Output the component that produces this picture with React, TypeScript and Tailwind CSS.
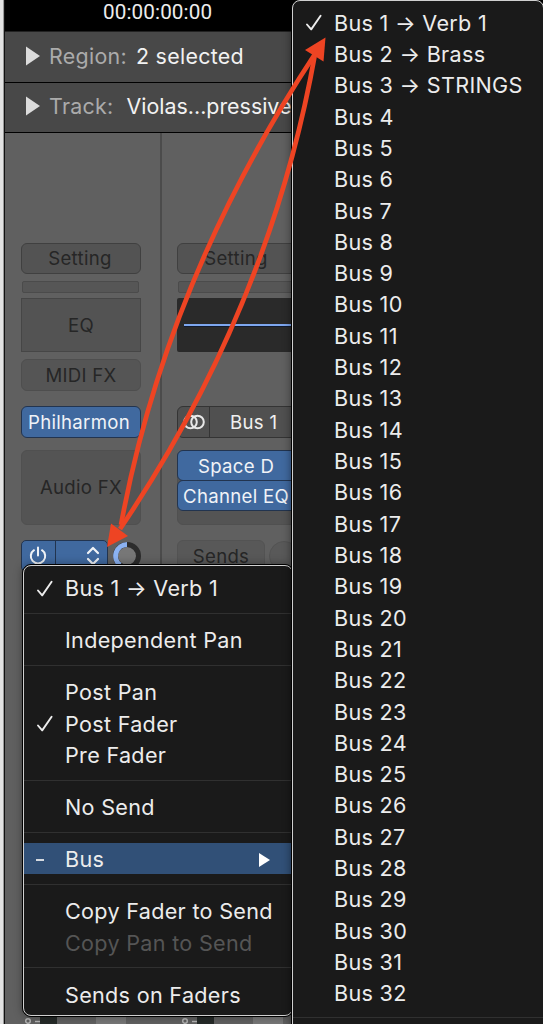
import React from 'react'
import clsx from 'clsx'

type Item = {
    label?: string
    checked?: boolean
    disabled?: boolean
    active?: boolean
}

const sendMenu: Item[] = [
    { label: 'Bus 1 → Verb 1', checked: true },
    {},
    { label: 'Independent Pan' },
    {},
    { label: 'Post Pan' },
    { label: 'Post Fader', checked: true },
    { label: 'Pre Fader' },
    {},
    { label: 'No Send' },
    {},
    { label: 'Bus', active: true },
    {},
    { label: 'Copy Fader to Send' },
    { label: 'Copy Pan to Send', disabled: true },
    {},
    { label: 'Sends on Faders' },
]

const busNames: Record<number, string> = { 1: 'Verb 1', 2: 'Brass', 3: 'STRINGS' }

const busMenu: Item[] = Array.from({ length: 32 }, (_, i) => ({
    label: busNames[i + 1] ? `Bus ${i + 1} → ${busNames[i + 1]}` : `Bus ${i + 1}`,
    checked: i === 0,
}))

const Check = () => (
    <svg width="18" height="18" viewBox="0 0 18 18" fill="none" stroke="#ececec" strokeWidth="1.9" strokeLinecap="round" strokeLinejoin="round">
        <path d="M2 10.5 L6.2 15.4 L15.6 1.8" />
    </svg>
)

const MenuRow = ({ item }: { item: Item }) => {
    if (!item.label) {
        return (
            <div className="flex h-[20.85px] shrink-0 items-center">
                <div className="-mt-px h-px w-full bg-[#303030]"></div>
            </div>
        )
    }
    return (
        <div className={clsx('flex h-[31.32px] shrink-0 items-center whitespace-pre pt-[2px] text-[21.6px] leading-[29px]',
            item.active && 'bg-[#315077]',
            item.disabled ? 'text-[#555]' : 'text-[#ececec]')}>
            <div className="flex w-[41px] shrink-0 pl-[12px]">
                {item.checked && <Check />}
                {item.active && <div className="h-[2px] w-[8px] bg-[#d5dae0]"></div>}
            </div>
            <span className="grow">{item.label}</span>
            {item.active && (
                <svg className="mr-[22px]" width="11" height="14" viewBox="0 0 11 14">
                    <path d="M0 0 L11 7 L0 14 Z" fill="#fff" />
                </svg>
            )}
        </div>
    )
}

const InspectorRow = ({ name, value, valueClass }: { name: string; value: string; valueClass: string }) => (
    <div className="flex h-[50.5px] shrink-0 items-center border-b border-black bg-[#484848] pb-[2px] pl-[21px] text-[21.4px] whitespace-nowrap">
        <svg className="shrink-0" width="14" height="20" viewBox="0 0 14 20">
            <path d="M0 0.5 L14 10 L0 19.5 Z" fill="#dcdcdc" />
        </svg>
        <span className="ml-[9px] text-[#ababab]">{name}</span>
        <span className={clsx('text-[#f2f2f2]', valueClass)}>{value}</span>
    </div>
)

const slot = 'flex w-[120px] shrink-0 items-center justify-center border pt-px text-[18.6px] whitespace-nowrap'

const StripOne = () => (
    <div className="flex w-[157px] shrink-0 flex-col border-r-2 border-[#4b4b4b] pl-[16px] pt-[110px] text-[#262626]">
        <div className={clsx(slot, 'h-[31px] rounded-[6px] border-[#404040] bg-[#535353] pr-[2px]')}>Setting</div>
        <div className="mt-[7px] ml-[1px] h-[12px] w-[117px] shrink-0 rounded-[2px] border border-[#4b4b4b] bg-[#565656]"></div>
        <div className={clsx(slot, 'mt-[5px] h-[54px] border-[#464646] bg-[#535353]')}>EQ</div>
        <div className={clsx(slot, 'mt-[7px] h-[32px] rounded-[6px] border-[#4e4e4e] bg-[#555]')}>MIDI FX</div>
        <div className={clsx(slot, 'mt-[15px] h-[32px] rounded-[6px] border-[#22344f] bg-[#40699f] pr-[4px] text-[#f0f3f7]')}>Philharmon</div>
        <div className={clsx(slot, 'mt-[12px] h-[75px] rounded-[6px] border-[#505050] bg-[#545454]')}>Audio FX</div>
        <div className="mt-[15px] flex">
            <div className="flex h-[32px] w-[87px] items-center rounded-[5px] border border-[#22344f] bg-[#40699f]">
                <div className="flex h-full w-[34px] items-center justify-center border-r border-[#22344f]">
                    <svg className="mr-[1px]" width="18" height="20" viewBox="0 0 18 20" fill="none" stroke="#f0f3f7" strokeWidth="2" strokeLinecap="round">
                        <path d="M9 1.500 V9.500 M5 4.2 A7.2 7.2 0 1 0 13 4.2" />
                    </svg>
                </div>
                <svg className="ml-[30px] shrink-0" width="14" height="20" viewBox="0 0 14 20" fill="none" stroke="#f0f3f7" strokeWidth="2.2" strokeLinecap="round" strokeLinejoin="round">
                    <path d="M2 7 L7 2 L12 7 M2 13 L7 18 L12 13" />
                </svg>
            </div>
            <svg className="ml-[5px] mt-[1px]" width="28" height="30" viewBox="0 0 28 30">
                <circle cx="14" cy="15" r="9" fill="#777" />
                <circle cx="14" cy="15" r="11.5" fill="none" stroke="#2c2c2c" strokeWidth="5" />
                <path d="M14 3.5 A11.5 11.5 0 0 0 7 24" fill="none" stroke="#8bb2f2" strokeWidth="5" />
            </svg>
        </div>
    </div>
)

const StripTwo = () => (
    <div className="flex grow flex-col pl-[15px] pt-[110px] text-[#262626]">
        <div className={clsx(slot, 'h-[31px] rounded-[6px] border-[#404040] bg-[#535353] pr-[2px]')}>Setting</div>
        <div className="mt-[7px] ml-[1px] h-[12px] w-[117px] shrink-0 rounded-[2px] border border-[#4b4b4b] bg-[#565656]"></div>
        <div className="mt-[5px] flex h-[54px] w-[120px] shrink-0 items-center rounded-[2px] bg-[#2a2a2a] pl-[7px]">
            <div className="h-[3px] w-full border-b border-[#101b30] bg-[#7ea7ef]"></div>
        </div>
        <div className="mt-[54px] flex h-[32px] w-[130px] shrink-0 items-center rounded-[6px] border border-[#343434] bg-[#505050] text-[18.6px] text-[#f0f0f0]">
            <div className="flex h-full w-[32px] items-center justify-center border-r border-[#343434]">
                <svg width="22" height="16" viewBox="0 0 22 16" fill="none" stroke="#e8e8e8" strokeWidth="2">
                    <circle cx="7.5" cy="8" r="6.3" />
                    <circle cx="14.5" cy="8" r="6.3" />
                </svg>
            </div>
            <span className="ml-[20px] pt-[2px]">Bus 1</span>
        </div>
        <div className="mt-[12px] h-[75px] w-[120px] shrink-0 rounded-[6px] border border-[#505050] bg-[#545454] text-[18.6px] whitespace-nowrap text-[#f0f3f7]">
            <div className="-mt-px -ml-px flex h-[31px] w-[120px] items-center rounded-[6px] border border-[#22344f] bg-[#40699f] pl-[20px] pt-[2px]">Space D</div>
            <div className="-mt-px -ml-px flex h-[31px] w-[120px] items-center rounded-[6px] border border-[#22344f] bg-[#40699f] pl-[5px] pt-[2px]">Channel EQ</div>
        </div>
        <div className="mt-[15px] flex">
            <div className="flex h-[32px] w-[88px] shrink-0 items-center justify-center rounded-[6px] border border-[#535353] bg-[#585858] pt-[2px] text-[18.6px]">Sends</div>
            <div className="ml-[4px] mt-[1px] h-[30px] w-[30px] shrink-0 rounded-full border border-[#535353] bg-[#595959]"></div>
        </div>
    </div>
)

// fader scales that stick out under the send menu
const FaderScale = () => (
    <div className="flex h-[7px] w-[157px] shrink-0 items-start">
        <svg width="15" height="7" viewBox="0 0 15 7" fill="none" stroke="#b5b5b5" strokeWidth="1.4">
            <circle cx="3" cy="4" r="2.3" />
            <path d="M10 4.5 H15" />
        </svg>
        <div className="h-full w-[17px] bg-[#252a28]"></div>
        <div className="ml-[39px] h-full w-[30px] bg-[#777]"></div>
    </div>
)

const Arrows = () => (
    <svg className="absolute left-0 top-0 z-30" width="543" height="1024" viewBox="0 0 543 1024" fill="none">
        <g stroke="#ee4423" strokeWidth="4.7">
            <path d="M121 525 Q166 280 315 54" />
            <path d="M120 529 Q270 307 315 54" />
        </g>
        <g fill="#ee4423">
            <path d="M107 547 L111 523.5 L128 536 Z" />
            <path d="M325.500 37.500 L305 50 L323.500 61.500 Z" />
        </g>
    </svg>
)

export default function App() {
    return (
        <div className="relative flex h-[1024px] w-[543px] overflow-hidden bg-[#606060] font-['Inter',sans-serif] tracking-[0.3px]">
            <div className="w-[5px] shrink-0 border-l-3 border-r border-l-[#e2e2e2] border-r-[#111] bg-[#999]"></div>

            <div className="flex grow flex-col">
                <div className="h-[32px] shrink-0 border-b border-[#222] bg-black pl-[98px] text-[#ececec]">
                    <div className="w-[120px] font-['Roboto',sans-serif] text-[20.7px] leading-[24px] tracking-[0.1px]">00:00:00:00</div>
                </div>
                <InspectorRow name="Region:" value="2 selected" valueClass="ml-[9px]" />
                <InspectorRow name="Track:" value="Violas...pressive" valueClass="ml-[13px] tracking-[0px]" />
                <div className="flex h-[884px] shrink-0">
                    <StripOne />
                    <StripTwo />
                </div>
                <div className="flex h-[7px] shrink-0 pl-[20px]">
                    <FaderScale />
                    <FaderScale />
                </div>
            </div>

            {/* Send slot menu */}
            <div className="absolute left-[22px] top-[564px] z-10 flex h-[453px] w-[272px] flex-col rounded-[9px] border border-black bg-[#1a1a1a] shadow-[0_0_8px_rgba(0,0,0,0.35)]">
                <div className="flex grow flex-col rounded-[8px] border-[1.500px] border-[#d0d0d0] pt-[5.900px]">
                    {sendMenu.map((item, i) => <MenuRow key={i} item={item} />)}
                </div>
            </div>

            {/* Bus submenu */}
            <div className="absolute left-[291px] top-[-1px] z-20 flex h-[1040px] w-[254px] flex-col rounded-[9px] border border-black bg-[#1a1a1a] shadow-[0_0_8px_rgba(0,0,0,0.45)]">
                <div className="flex grow flex-col rounded-[8px] border border-[#d0d0d0] pt-[5.500px]">
                    {busMenu.map((item, i) => <MenuRow key={i} item={item} />)}
                    <div className="-mt-px">
                        <MenuRow item={{}} />
                    </div>
                </div>
            </div>

            <Arrows />
        </div>
    )
}
